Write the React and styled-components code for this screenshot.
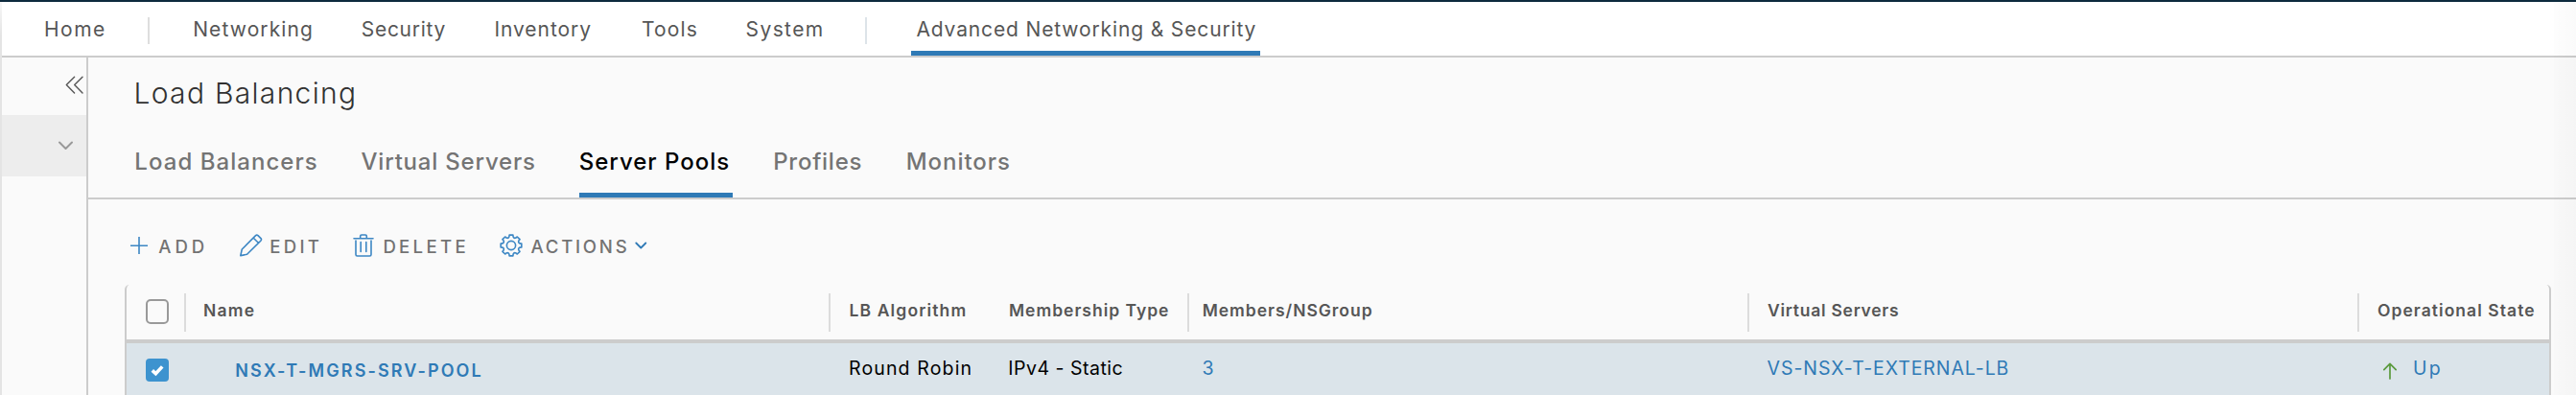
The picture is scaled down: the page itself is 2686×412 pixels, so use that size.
import React from "react";
import styled, { createGlobalStyle, css } from "styled-components";

const Global = createGlobalStyle`
  * { box-sizing: border-box; }
  body {
    margin: 0;
    background: #fafafa;
    font-family: Inter, "Liberation Sans", sans-serif;
    overflow: hidden;
  }
`;

const Page = styled.div`
  position: relative;
  display: flex;
  flex-direction: column;
  height: 412px;
  border-top: 2px solid #0d2a3d;

  &::before, &::after {
    content: "";
    position: absolute;
    top: 0;
    bottom: 0;
  }
  &::before {
    left: 0;
    width: 2px;
    background: linear-gradient(#f7f7f7, #e4e4e4 36px);
  }
  &::after {
    right: 0;
    width: 23px;
    background: linear-gradient(90deg, rgba(0, 0, 0, 0.006), rgba(0, 0, 0, 0.018));
  }
`;

const NavBar = styled.nav`
  display: flex;
  flex: none;
  height: 58px;
  padding-left: 46px;
  background: #fff;
  border-bottom: 2px solid #ccc;
`;

const NavItem = styled.a`
  width: ${(p) => p.$width}px;
  line-height: 57px;
  font-size: 21px;
  letter-spacing: ${(p) => p.$spacing}px;
  color: #565656;
  white-space: nowrap;
  ${(p) => p.$active && css`
    height: 56px;
    padding-left: 5.5px;
    border-bottom: 5px solid #2f7ab6;
  `}
`;

const NavDivider = styled.span`
  width: 2px;
  height: 28px;
  margin: 16px ${(p) => p.$after}px 0 0;
  background: ${(p) => p.$color};
`;

const Body = styled.div`
  display: flex;
  flex: 1;
`;

const Sidebar = styled.aside`
  width: 92px;
  padding-left: 2px;
  border-right: 2px solid #ccc;
`;

const Collapse = styled.div`
  display: flex;
  justify-content: flex-end;
  height: 60px;
  padding: 19px 3px 0 0;
`;

const SideGroup = styled.div`
  display: flex;
  justify-content: flex-end;
  height: 64px;
  padding: 26px 13px 0 0;
  background: #ededed;
`;

const Main = styled.main`
  flex: 1;
  min-width: 0;
`;

const Title = styled.h1`
  height: 74px;
  margin: 0;
  padding-left: 47.5px;
  font-size: 30px;
  font-weight: 300;
  line-height: 75px;
  letter-spacing: 1.3px;
  color: #313131;
`;

const Tabs = styled.div`
  display: flex;
  height: 74px;
  padding-left: 48.3px;
  border-bottom: 2px solid #ccc;
`;

const TabSlot = styled.div`
  width: ${(p) => p.$width}px;
`;

const Tab = styled.a`
  display: block;
  height: 72px;
  font-size: 24px;
  font-weight: 500;
  line-height: 70px;
  letter-spacing: ${(p) => p.$spacing}px;
  white-space: nowrap;
  color: #747474;
  ${(p) => p.$active && css`
    width: 160px;
    color: #000;
    border-bottom: 5px solid #2f7ab6;
  `}
`;

const Toolbar = styled.div`
  display: flex;
  height: 89px;
  padding: 36px 0 0 44px;
`;

const ToolButton = styled.div`
  display: flex;
  width: ${(p) => p.$width}px;
  font-size: 18.6px;
  font-weight: 500;
  line-height: 27px;
  letter-spacing: ${(p) => p.$spacing}px;
  white-space: nowrap;
  color: #737373;
`;

const ToolIcon = styled.span`
  flex: none;
  width: ${(p) => p.$width}px;
  height: 24px;
  line-height: 0;
`;

const Caret = styled.span`
  margin-left: ${(p) => p.$gap}px;
  line-height: 0;
  padding-top: 8px;
`;

const Table = styled.div`
  width: 2530px;
  height: 115px;
  margin-left: 38px;
  border: 2px solid #ccc;
  border-width: 0 2px;
  border-radius: 5px 5px 0 0;
`;

const columns = "60px 672px 178px 196px 584px 636px 200px";

const HeaderRow = styled.div`
  display: grid;
  grid-template-columns: ${columns};
  height: 61px;
  padding-top: 9px;
  border-bottom: 4px solid #ccc;
`;

const HeaderCell = styled.div`
  height: 40px;
  padding-left: ${(p) => p.$pad}px;
  border-left: 2px solid ${(p) => (p.$divider ? "#dcdcdc" : "transparent")};
  font-size: 17.5px;
  font-weight: 600;
  line-height: 35px;
  letter-spacing: ${(p) => p.$spacing}px;
  white-space: nowrap;
  color: #565656;
`;

const CheckCell = styled.div`
  padding: ${(p) => p.$top}px 0 0 20px;
  line-height: 0;
`;

const EmptyBox = styled.span`
  display: block;
  width: 24px;
  height: 26px;
  border: 2px solid #999;
  border-radius: 5px;
`;

const CheckedBox = styled.span`
  display: block;
  width: 24px;
  height: 24px;
  border-radius: 4px;
  background: #3d93cf;
`;

const Row = styled.div`
  display: grid;
  grid-template-columns: ${columns};
  height: 54px;
  padding-top: 16px;
  background: #dbe4ea;
`;

const Cell = styled.div`
  display: flex;
  padding-left: ${(p) => p.$pad}px;
  font-size: 19.5px;
  line-height: 21px;
  letter-spacing: ${(p) => p.$spacing}px;
  white-space: nowrap;
  color: ${(p) => (p.$link ? "#2f7ab6" : "#000")};
`;

const NameCell = styled(Cell)`
  font-size: 18px;
  font-weight: 600;
  line-height: 26px;
`;

const StateIcon = styled.span`
  width: 33px;
  padding-top: 3px;
  line-height: 0;
`;

const Stroke = ({ w, h, color = "#3d87c4", sw = 1.6, children }) => (
  <svg width={w} height={h} viewBox={`0 0 ${w} ${h}`} fill="none" stroke={color}
    strokeWidth={sw} strokeLinejoin="round" strokeLinecap="round">{children}</svg>
);

const gearPath = (() => {
  const pt = (deg, r) => {
    const a = (deg * Math.PI) / 180;
    return `${(12 + r * Math.sin(a)).toFixed(2)} ${(12 - r * Math.cos(a)).toFixed(2)}`;
  };
  let d = "";
  for (let k = 0; k < 8; k++) {
    const a = k * 45;
    d += `${k ? "L" : "M"}${pt(a - 10, 11)} L${pt(a + 10, 11)} L${pt(a + 13, 9.3)} Q${pt(a + 22.5, 7.7)} ${pt(a + 32, 9.3)} `;
  }
  return d + "Z";
})();

const tools = [
  { label: "ADD", width: 114, slot: 29.3, spacing: 3.95,
    icon: <Stroke w={18} h={24}><path d="M9 3v18M0 12.3h18" strokeLinecap="butt" /></Stroke> },
  { label: "EDIT", width: 118, slot: 31.2, spacing: 3.3,
    icon: <Stroke w={24} h={24}><path d="M.8 22.6 2.3 16 16.6 1.6Q17.8.6 19 1.6L22 4.6Q23 5.8 22 7L7.6 21.3Z M14.3 4.2 19.6 9.5" /></Stroke> },
  { label: "DELETE", width: 153, slot: 31.4, spacing: 3.3,
    icon: <Stroke w={22} h={24}><path d="M1 4.7H21M7.7 4.3V2.2Q7.7 1 9 1H13Q14.3 1 14.3 2.2V4.3M3 7V21.5Q3 23 4.5 23H17.5Q19 23 19 21.5V7M8.2 8.5V18.5M13.8 8.5V18.5" /></Stroke> },
  { label: "ACTIONS", width: 160, slot: 32.5, spacing: 2.75, caret: true,
    icon: <Stroke w={24} h={24}><path d={gearPath} /><circle cx="12" cy="12" r="4.6" /></Stroke> },
];

const tabs = [
  ["Load Balancers", 236.2, 1.05],
  ["Virtual Servers", 227.3, 0.8],
  ["Server Pools", 202.4, 0.98, true],
  ["Profiles", 138.6, 0.75],
  ["Monitors", 120, 0.95],
];

export default function App() {
  return (
    <>
      <Global />
      <Page>
        <NavBar>
          <NavItem $width={108} $spacing={1.5}>Home</NavItem>
          <NavDivider $color="#dedede" $after={45.2} />
          <NavItem $width={175.6} $spacing={1.1}>Networking</NavItem>
          <NavItem $width={138.6} $spacing={0.7}>Security</NavItem>
          <NavItem $width={153.6} $spacing={0.95}>Inventory</NavItem>
          <NavItem $width={108.6} $spacing={1.15}>Tools</NavItem>
          <NavItem $width={124.4} $spacing={1.4}>System</NavItem>
          <NavDivider $color="#dde4e9" $after={46} />
          <NavItem $width={364} $spacing={0.86} $active>Advanced Networking &amp; Security</NavItem>
        </NavBar>
        <Body>
          <Sidebar>
            <Collapse>
              <Stroke w={19} h={19} color="#565656" sw={1.4}>
                <path d="M9.6 1.3 1.3 9.6 9.6 18M18 1.3 9.7 9.6 18 18" />
              </Stroke>
            </Collapse>
            <SideGroup>
              <Stroke w={17} h={12} color="#999" sw={2}><path d="M2 2.5 8.5 9 15 2.5" /></Stroke>
            </SideGroup>
          </Sidebar>
          <Main>
            <Title>Load Balancing</Title>
            <Tabs>
              {tabs.map(([label, width, spacing, active]) => (
                <TabSlot key={label} $width={width}>
                  <Tab $spacing={spacing} $active={active}>{label}</Tab>
                </TabSlot>
              ))}
            </Tabs>
            <Toolbar>
              {tools.map((t) => (
                <ToolButton key={t.label} $width={t.width} $spacing={t.spacing}>
                  <ToolIcon $width={t.slot}>{t.icon}</ToolIcon>
                  {t.label}
                  {t.caret && (
                    <Caret $gap={5.5}>
                      <Stroke w={13} h={8} color="#2f7ab6" sw={1.8}><path d="M1.3 1.5 6.3 6.5 11.3 1.5" /></Stroke>
                    </Caret>
                  )}
                </ToolButton>
              ))}
            </Toolbar>
            <Table>
              <HeaderRow>
                <CheckCell $top={6}><EmptyBox /></CheckCell>
                <HeaderCell $divider $pad={18} $spacing={1.2}>Name</HeaderCell>
                <HeaderCell $divider $pad={19.4} $spacing={1.15}>LB Algorithm</HeaderCell>
                <HeaderCell $pad={8} $spacing={0.98}>Membership Type</HeaderCell>
                <HeaderCell $divider $pad={13.7} $spacing={0.97}>Members/NSGroup</HeaderCell>
                <HeaderCell $divider $pad={19} $spacing={0.74}>Virtual Servers</HeaderCell>
                <HeaderCell $divider $pad={19} $spacing={1.05}>Operational State</HeaderCell>
              </HeaderRow>
              <Row>
                <CheckCell $top={0}>
                  <CheckedBox>
                    <Stroke w={24} h={24} color="#fff" sw={3.6}>
                      <path d="M6.8 12.4 10.4 15.8 17.2 8.4" strokeLinecap="butt" strokeLinejoin="miter" />
                    </Stroke>
                  </CheckedBox>
                </CheckCell>
                <NameCell $link $pad={53.3} $spacing={2.1}>NSX-T-MGRS-SRV-POOL</NameCell>
                <Cell $pad={21} $spacing={1.15}>Round Robin</Cell>
                <Cell $pad={9.3} $spacing={0.5}>IPv4 - Static</Cell>
                <Cell $link $pad={15.5} $spacing={0}>3</Cell>
                <Cell $link $pad={20.6} $spacing={0.92}>VS-NSX-T-EXTERNAL-LB</Cell>
                <Cell $link $pad={25} $spacing={2.2}>
                  <StateIcon>
                    <Stroke w={18} h={20} color="#5a9a3d" sw={1.7}><path d="M9 18V2.5M2.8 8.6 9 2.4 15.2 8.6" /></Stroke>
                  </StateIcon>
                  Up
                </Cell>
              </Row>
            </Table>
          </Main>
        </Body>
      </Page>
    </>
  );
}
